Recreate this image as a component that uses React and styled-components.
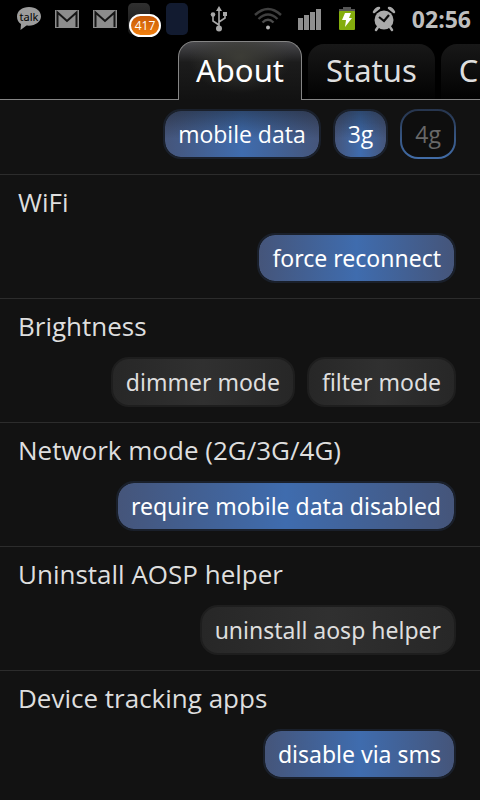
import React from 'react'
import styled, { createGlobalStyle, css } from 'styled-components'

const sections = [
    { actions: [
        { label: 'mobile data', variant: 'on' },
        { label: '3g', variant: 'on' },
        { label: '4g', variant: 'outline' },
    ] },
    { title: 'WiFi', actions: [{ label: 'force reconnect', variant: 'on' }] },
    { title: 'Brightness', actions: [{ label: 'dimmer mode' }, { label: 'filter mode' }] },
    {
        title: 'Network mode (2G/3G/4G)',
        actions: [{ label: 'require mobile data disabled', variant: 'on' }],
    },
    { title: 'Uninstall AOSP helper', actions: [{ label: 'uninstall aosp helper' }] },
    { title: 'Device tracking apps', actions: [{ label: 'disable via sms', variant: 'on' }] },
]

const tabs = ['About', 'Status', 'C']

const TalkIcon = () => (
    <svg width="26" height="26" viewBox="0 0 26 26">
        <path d="M13 1C6 1 1 5 1 10.500c0 3.500 1.500 6 4 7.500L4.500 24l6-4.500c8 1 14.500-3.500 14.500-9S20 1 13 1z" fill="#9c9c9c" />
        <text x="13" y="15" textAnchor="middle" fontFamily="Noto Sans" fontSize="11" fill="#000">talk</text>
    </svg>
)

const MailIcon = () => (
    <svg width="26" height="20" viewBox="0 0 26 20">
        <path d="M1 1h24v18H1z" fill="#8c8c8c" />
        <path d="M3.500 18V3.500L13 12l9.500-8.500V18" fill="none" stroke="#151515" strokeWidth="2" />
    </svg>
)

const UsbIcon = () => (
    <svg width="18" height="26" viewBox="0 0 18 26" fill="none" stroke="#a8a8a8" strokeWidth="1.600">
        <path d="M9 4v18M9 19l-6-4V9M9 16l6-4V8" />
        <path d="M9 0l3 5H6z" fill="#a8a8a8" stroke="none" />
        <circle cx="9" cy="22.500" r="3" fill="#a8a8a8" stroke="none" />
        <circle cx="3" cy="8.500" r="2.300" fill="#a8a8a8" stroke="none" />
        <path d="M13 6h4v4h-4z" fill="#a8a8a8" stroke="none" />
    </svg>
)

const WifiIcon = () => (
    <svg width="28" height="24" viewBox="0 0 28 24" fill="none" strokeWidth="2.400">
        <path d="M1 8Q14-4 27 8" stroke="#3f3f3f" />
        <path d="M4.500 12Q14 3 23.500 12" stroke="#3f3f3f" />
        <path d="M8.500 15.500Q14 10 19.500 15.500" stroke="#4c4c4c" />
        <circle cx="14" cy="20.500" r="2" fill="#b4b4b4" />
    </svg>
)

const SignalIcon = () => (
    <svg width="24" height="22" viewBox="0 0 24 22" fill="#8f8f8f">
        <path d="M0 10h5v12H0zM6 7h5v15H6zM12 4h5v18h-5zM18 1h5v21h-5z" />
    </svg>
)

const BatteryIcon = () => (
    <svg width="18" height="24" viewBox="0 0 18 24">
        <path d="M5 0h8v2h4v4H1V2h4z" fill="#555" />
        <rect x="1" y="4" width="16" height="19" rx="1" fill="#84ad0d" />
        <path d="M7 6h6l-2 5h3l-7 9 1-7H4z" fill="#fff" />
    </svg>
)

const AlarmIcon = () => (
    <svg width="24" height="26" viewBox="0 0 24 26">
        <path d="M2 6Q4 2 7 2zM22 6Q20 2 17 2z" stroke="#aaa" strokeWidth="2.500" strokeLinejoin="round" />
        <path d="M6 21l-2 3M18 21l2 3" stroke="#aaa" strokeWidth="2.500" strokeLinecap="round" />
        <circle cx="12" cy="14" r="9.500" fill="#aaa" />
        <path d="M7 11l5 4 5-6" fill="none" stroke="#0a0a0a" strokeWidth="2.200" />
    </svg>
)

const App = () => (
    <Screen>
        <GlobalStyle />
        <StatusBar>
            <Notifications>
                <TalkIcon />
                <MailIcon />
                <MailIcon />
                <AppIcon>
                    <Badge>417</Badge>
                </AppIcon>
                <AppIcon $blue />
            </Notifications>
            <SystemIcons>
                <UsbIcon />
                <Radios>
                    <WifiIcon />
                    <SignalIcon />
                    <BatteryIcon />
                    <AlarmIcon />
                </Radios>
                <Clock>02:56</Clock>
            </SystemIcons>
        </StatusBar>
        <TabStrip>
            {tabs.map((tab, i) => (
                <Tab key={tab} type="button" $active={i === 0}>
                    {tab}
                </Tab>
            ))}
        </TabStrip>
        <main>
            {sections.map(({ title, actions }) => (
                <Section key={title || 'radios'}>
                    {title && <Title>{title}</Title>}
                    <Actions>
                        {actions.map(({ label, variant }) => (
                            <Action
                                key={label}
                                type="button"
                                $variant={variant}
                                $faded={!title}
                                disabled={variant === 'outline'}
                            >
                                {label}
                            </Action>
                        ))}
                    </Actions>
                </Section>
            ))}
        </main>
    </Screen>
)

const fonts = {
    base: "'Open Sans', 'Noto Sans', sans-serif",
    action: "'Noto Sans', 'Open Sans', sans-serif",
}

const GlobalStyle = createGlobalStyle`
    body {
        margin: 0;
        background: #121212;
    }
    svg {
        display: block;
        flex: none;
    }
`

const Screen = styled.div`
    min-height: 100vh;
    overflow: hidden;
    box-sizing: border-box;
    background: #121212;
    color: #dedede;
    font-family: ${fonts.base};
`

const StatusBar = styled.header`
    display: flex;
    align-items: center;
    justify-content: space-between;
    height: 38px;
    padding: 0 9px 0 16px;
    background: #000;
`

const Notifications = styled.div`
    display: flex;
    align-items: center;
    gap: 12px;
`

const AppIcon = styled.span`
    position: relative;
    width: 22px;
    height: 32px;
    margin: 0 6px 0 -2px;
    border-radius: 5px;
    background: ${(props) =>
        props.$blue ? '#121b30' : 'linear-gradient(#303030, #161616)'};
`

const Badge = styled.span`
    position: absolute;
    top: 11px;
    left: 1px;
    width: 28px;
    border: 2px solid #fff;
    border-radius: 12px;
    background: linear-gradient(#c85a08, #f08010);
    color: #fff;
    font-size: 12px;
    line-height: 19px;
    text-align: center;
`

const SystemIcons = styled.div`
    display: flex;
    align-items: center;
    gap: 16px;
`

const Radios = styled.div`
    display: flex;
    align-items: center;
    gap: 16px;
    padding-left: 10px;
`

const Clock = styled.time`
    color: #bebebe;
    font-size: 23px;
    font-weight: 700;
    line-height: 38px;
`

const TabStrip = styled.nav`
    display: flex;
    align-items: flex-end;
    gap: 6px;
    height: 62px;
    padding-left: 178px;
    background: linear-gradient(#858585, #858585) bottom / 100% 1px no-repeat #000;
`

const Tab = styled.button`
    display: flex;
    flex: none;
    box-sizing: border-box;
    height: 55px;
    margin: 0 0 1px;
    padding: 0 18px;
    border: 0;
    border-radius: 16px 16px 0 0;
    background: linear-gradient(#181818, #020202);
    color: #dedede;
    font-family: ${fonts.action};
    font-size: 31px;
    line-height: 52px;

    ${(props) =>
        props.$active &&
        css`
            height: 59px;
            margin: 0;
            padding: 0 17px;
            border: 1px solid #858585;
            border-bottom: 0;
            background: radial-gradient(ellipse at 50% 25%, #3c3c36, transparent 60%),
                linear-gradient(#4a4a4e, #1c1c1c 35%, #121212);
            color: #fff;
            line-height: 56px;
        `}
`

const Section = styled.section`
    padding: 11px 24px 15px 18px;
    border-bottom: 1px solid #2c2c2c;

    &:first-child {
        padding-top: 9px;
    }
    &:last-child {
        border-bottom: 0;
    }
`

const Title = styled.h2`
    margin: 0 0 15px;
    font-size: 26px;
    font-weight: 400;
    line-height: 32px;
`

const Actions = styled.div`
    display: flex;
    justify-content: flex-end;
    gap: 12px;
`

const variants = {
    on: css`
        border-color: #1a202b;
        background: ${(props) =>
                props.$faded
                    ? 'linear-gradient(rgba(18, 18, 18, 0.4), transparent 60%)'
                    : 'linear-gradient(transparent, transparent)'}
                padding-box,
            linear-gradient(90deg, #45557a, #3f6cae 50%, #45557a) padding-box;
        color: #fff;
    `,
    outline: css`
        border-color: transparent;
        background: linear-gradient(#0e0e0e, #0e0e0e) padding-box,
            linear-gradient(#26344c, #426da8) border-box;
        color: #686868;
    `,
}

const Action = styled.button`
    box-sizing: border-box;
    height: 50px;
    padding: 0 13px;
    border: 2px solid #1e1e1e;
    border-radius: 18px;
    background: linear-gradient(90deg, #272727, #303030 50%, #272727);
    color: #dedede;
    font-family: ${(props) => (props.$faded ? fonts.base : fonts.action)};
    font-size: 23px;
    line-height: 44px;
    ${(props) => variants[props.$variant]}
`

export default App
